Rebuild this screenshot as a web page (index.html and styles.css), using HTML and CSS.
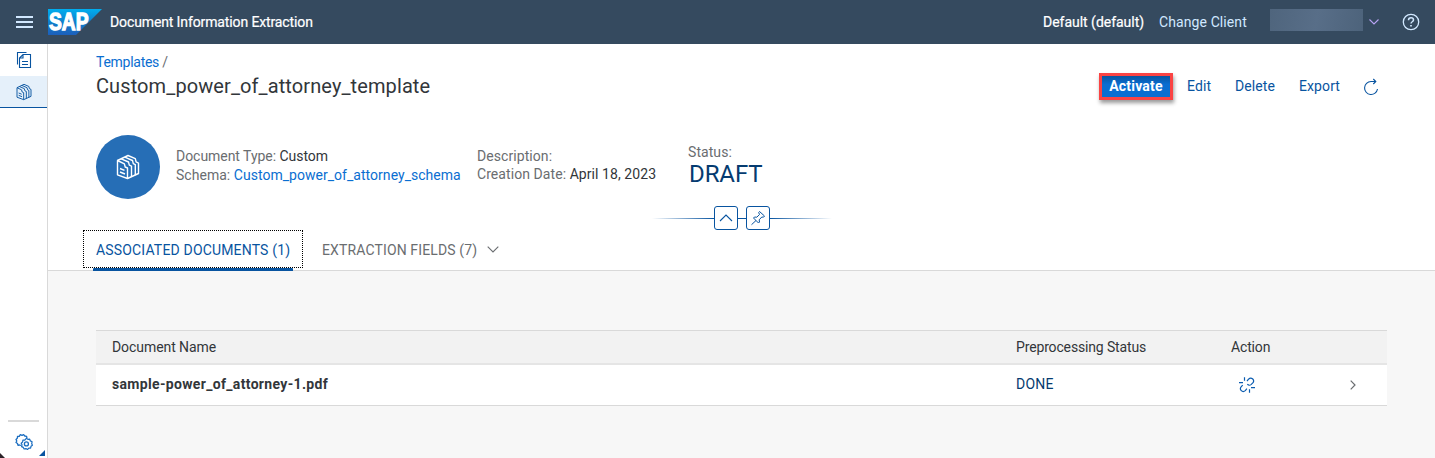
FILE: index.html
```html
<!DOCTYPE html>
<html lang="en">
<head>
<meta charset="utf-8">
<title>Document Information Extraction</title>
<link rel="stylesheet" href="styles.css">
</head>
<body>
<header class="shell">
  <svg class="menu" width="17" height="14" viewBox="0 0 17 14"><path d="M0 2h17M0 7h17M0 12h17" stroke="#d1e8ff" stroke-width="2"/></svg>
  <svg class="logo" width="54" height="26" viewBox="0 0 54 26">
    <defs><linearGradient id="sap" x1="0" y1="0" x2="0" y2="1"><stop offset="0" stop-color="#00aeef"/><stop offset=".5" stop-color="#0f80cc"/><stop offset="1" stop-color="#1c5fbb"/></linearGradient></defs>
    <path d="M0 0h54L28 26H0z" fill="url(#sap)"/>
    <text x="1" y="20.8" class="logo-text" textLength="39.5" lengthAdjust="spacingAndGlyphs">SAP</text>
  </svg>
  <span class="product">Document Information Extraction</span>
  <div class="shell-right">
    <span class="client">Default (default)</span>
    <span class="change">Change Client</span>
    <span class="user"></span>
    <svg class="user-arrow" width="10" height="6" viewBox="0 0 10 6"><path d="M.5.5 5 5 9.500.5" fill="none" stroke="#b9a4f5" stroke-width="1.1"/></svg>
    <svg class="help" width="18" height="18" viewBox="0 0 18 18" fill="none" stroke="#d1e8ff" stroke-width="1.3"><circle cx="9" cy="9" r="7.700"/><path d="M6.500 7.200C6.500 5.600 7.500 4.800 9 4.800s2.500.9 2.500 2.200c0 1.700-2.500 1.800-2.500 3.500" stroke-width="1.500"/><path d="M9 12v1.600" stroke-width="1.700"/></svg>
  </div>
</header>
<div class="body">
  <nav class="side">
    <a class="side-item">
      <svg width="16" height="18" viewBox="0 0 16 18" fill="none" stroke="#0854a0" stroke-width="1.100"><path d="M1.500 13.500V1.500h9M7 3.500h7.500v13h-11V7zM3.500 7H7V3.500"/><path d="M6 10.500h6M6 13.500h6"/></svg>
    </a>
    <a class="side-item selected">
      <svg width="16" height="18" viewBox="0 0 24 26"><use href="#binders"/></svg>
    </a>
    <div class="side-bottom">
      <div class="side-rule"></div>
      <svg class="gears" width="18" height="18" viewBox="0 0 18 18" fill="none" stroke="#1a6dc0" stroke-linejoin="round"><path d="M6 12.500 4.500 12 3 12.300 2.500 10.500 1 9.500 1.800 8 1 6.500 2.300 5.300 2.500 3.500 4.300 3.300 5.300 1.700 7 2.400 8.600 1.600 9.800 3 11.600 3.300 12 5" stroke-width="1.300"/><path d="m11.500 5.200 1.400 1.200 1.800-.2.700 1.700 1.700.8-.4 1.800.7 1.700-1.400 1.100-.4 1.800-1.800.1-1.300 1.300-1.600-.9-1.800.4-.8-1.600-1.700-.8.400-1.800-.8-1.600 1.400-1.200.3-1.800 1.900-.1z" stroke-width="1.200"/><circle cx="11.400" cy="10.900" r="2" stroke-width="1.300"/></svg>
      <i class="corner"></i>
      <i class="corner-dark"></i>
    </div>
  </nav>
  <main class="main">
    <section class="object-header">
      <div class="title-row">
        <div class="titles">
          <div class="crumb"><a>Templates</a> /</div>
          <h1 class="title">Custom_power_of_attorney_template</h1>
        </div>
        <div class="actions">
          <a class="activate">Activate</a>
          <a class="edit">Edit</a>
          <a class="delete">Delete</a>
          <a class="export">Export</a>
          <svg width="16" height="18" viewBox="0 0 16 18" fill="none" stroke="#0854a0" stroke-width="1.100"><path d="M12.500 3.500H8A6.500 6.500 0 1 0 14.500 11"/><path d="M10.300 1 12.800 3.500 10.300 6"/></svg>
        </div>
      </div>
      <div class="facts">
        <div class="avatar"><svg width="24" height="26" viewBox="0 0 24 26">
          <g id="binders" fill="none" stroke="currentColor" stroke-width="1.400" stroke-linejoin="round">
            <path d="M1.500 6.500v14.300l10 3.700V14l-2.300-1-.8-3.200z"/>
            <path d="M5.200 4.800 12.500 8l.8 3.200 2.200 1v10.500M8.800 3.200l7.700 3.300.8 3.200 2 1v10.500"/>
            <path d="M1.500 6.500 12 1.500l7.300 3.200.8 3.200 2.400 1.200v10.400l-11 5"/>
            <path d="M4 14.500l4.500 1.800M4 18l5 2"/>
          </g></svg></div>
        <div class="col col-type">
          <div>Document Type: <b>Custom</b></div>
          <div class="schema">Schema: <a>Custom_power_of_attorney_schema</a></div>
        </div>
        <div class="col col-desc">
          <div>Description:</div>
          <div>Creation Date: <b>April 18, 2023</b></div>
        </div>
        <div class="col col-status">
          <div>Status:</div>
          <div class="draft">DRAFT</div>
        </div>
      </div>
      <div class="handle">
        <i class="fade-left"></i>
        <span class="knob"><svg width="14" height="8" viewBox="0 0 14 8"><path d="M1 7 7 1l6 6" fill="none" stroke="#0854a0" stroke-width="1.100"/></svg></span>
        <i class="joint"></i>
        <span class="knob"><svg width="16" height="16" viewBox="0 0 16 16" fill="none" stroke="#0854a0" stroke-linejoin="round"><path d="m9.500 1.500 5 4.500-1 1.200-1.700-.2-2.600 2.800.3 2.200-1 1L3.500 8l1-1 2.300.2 2.700-2.700-.8-2zM6 10.500l-4.500 4.200"/></svg></span>
        <i class="fade-right"></i>
      </div>
      <div class="tabs">
        <div class="tab active"><span class="t1">ASSOCIATED DOCUMENTS (1)</span></div>
        <div class="tab"><span class="t2">EXTRACTION FIELDS (7)</span><svg width="12" height="7" viewBox="0 0 12 7"><path d="M.7.700 6 6 11.300.7" fill="none" stroke="#6a6d70" stroke-width="1.100"/></svg></div>
      </div>
    </section>
    <section class="content">
      <div class="table">
        <div class="row head"><span class="name-head">Document Name</span><span>Preprocessing Status</span><span>Action</span><span></span></div>
        <div class="row"><span class="file">sample-power_of_attorney-1.pdf</span><span class="done">DONE</span>
          <span class="unlink"><svg width="16" height="16" viewBox="0 0 16 16" fill="none" stroke="#0a5cb0" stroke-width="1.200"><path d="M5.500.3v3.500M0 5.700h4M10.500 12.200v3.500M12 10.700h4M8 4.200l1.500-2C11 .8 12.500 1 13.800 2c1.200 1.300 1 2.700 0 3.900L12 7.600c-1 .8-2.500.8-3.700-.3M3.700 8.200 2.300 9.700c-1.100 1.200-1.200 2.700 0 3.900 1.200 1.200 2.700 1.100 4 0l1.600-1.900"/></svg></span>
          <span class="nav"><svg width="6" height="10" viewBox="0 0 6 10"><path d="M.7.700 5 5 .7 9.300" fill="none" stroke="#6a6d70" stroke-width="1.200"/></svg></span></div>
      </div>
    </section>
  </main>
</div>
</body>
</html>
```
FILE: styles.css
```css
* { box-sizing: border-box; }
body { margin: 0; width: 1435px; height: 458px; overflow: hidden; background: #f7f7f7; font: 14px/18px Roboto, "Noto Sans", sans-serif; color: #32363a; }
svg { display: block; flex: none; }
span, a, div { white-space: nowrap; }
.shell { height: 44px; background: #354a5f; display: flex; align-items: center; padding-left: 16px; color: #fff; }
.logo { margin-left: 15px; }
.logo-text { font: bold 23px "Liberation Sans", sans-serif; fill: #fff; stroke: #fff; stroke-width: 1.3px; }
.product { margin-left: 8px; letter-spacing: -.12px; -webkit-text-stroke: .2px #fff; }
.shell-right { margin-left: auto; display: flex; align-items: center; padding-right: 15px; }
.client { width: 116px; letter-spacing: -.02px; -webkit-text-stroke: .2px #fff; }
.change { width: 111px; letter-spacing: .1px; color: #d1e8ff; }
.user { width: 93px; height: 22px; margin-top: -4px; background: linear-gradient(100deg, #4f657d, #586e88 50%, #4d637b); }
.user-arrow { margin-left: 6px; }
.help { margin-left: 23px; }
.body { display: flex; height: 414px; }
.side { width: 48px; background: #fff; border-right: 1px solid #d9d9d9; display: flex; flex-direction: column; position: relative; }
.side-item { height: 32px; display: flex; justify-content: center; align-items: center; color: #0854a0; padding-left: 1px; }
.selected { background: #e5f0fa; border-bottom: 1px solid #0854a0; }
.side-bottom { margin-top: auto; height: 38px; }
.side-rule { margin: 0 8px; height: 2px; background: #d9d9d9; }
.gears { margin: 11px 0 0 15px; }
.corner { position: absolute; right: 2px; bottom: 2px; border-left: 6px solid transparent; border-bottom: 6px solid #0854a0; }
.corner-dark { position: absolute; left: 0; bottom: 0; border-right: 5px solid transparent; border-bottom: 5px solid #2b2228; }
.main { flex: 1; min-width: 0; }
.object-header { height: 227px; background: #fff; border-bottom: 1px solid #d9d9d9; padding: 9px 56px 0 48px; }
.title-row { display: flex; justify-content: space-between; height: 82px; }
.crumb { color: #6a6d70; letter-spacing: -.27px; }
.crumb a, .schema a { color: #0a6ed1; }
.title { margin: 3px 0 0; font-size: 20px; line-height: 24px; font-weight: 400; letter-spacing: .1px; }
.actions { display: flex; align-items: center; height: 27px; margin-top: 20px; color: #0854a0; letter-spacing: .1px; }
.activate { width: 74px; height: 27px; border: 3px solid #fa4343; background: linear-gradient(#0854a0, #0a6ed1 40%); color: #fff; font-weight: 700; letter-spacing: .2px; line-height: 21px; text-align: center; box-shadow: 1px 3px 4px rgba(0,0,0,.4); margin-right: 14px; }
.edit { width: 48px; }
.delete, .export { width: 64px; }
.edit, .delete, .export { padding-bottom: 2px; }
.facts { display: flex; height: 64px; color: #6a6d70; }
.facts b { font-weight: 400; color: #32363a; }
.avatar { width: 64px; height: 64px; border-radius: 50%; background: #266eb6; color: #fff; display: flex; align-items: center; justify-content: center; }
.col { letter-spacing: .07px; }
.col-type { margin-left: 16px; width: 301px; padding-top: 12px; line-height: 19px; letter-spacing: -.04px; }
.schema { letter-spacing: .03px; }
.col-desc { width: 211px; padding-top: 12px; }
.col-status { padding-top: 8px; }
.draft { font-size: 24px; line-height: 26px; color: #053b70; letter-spacing: -.1px; padding-left: 1px; }
.handle { display: flex; align-items: center; height: 24px; margin: 7px 0 0 556px; }
.fade-left, .fade-right { width: 62px; height: 1px; background: linear-gradient(to left, #0854a0, #fff); }
.fade-right { background: linear-gradient(to right, #0854a0, #fff); }
.joint { width: 8px; height: 1px; background: #0854a0; }
.knob { width: 24px; height: 24px; border: 1px solid #0854a0; border-radius: 3px; display: flex; align-items: center; justify-content: center; }
.tabs { display: flex; margin-left: -13px; height: 41px; }
.tab { display: flex; align-items: center; height: 38px; color: #6a6d70; gap: 10px; padding: 1px 0 0 19px; }
.tab.active { width: 220px; border: 1px dotted #000; padding: 2px 0 0 12px; color: #0854a0; position: relative; }
.tab.active::after { content: ""; position: absolute; left: 9px; bottom: -4px; width: 200px; height: 3px; background: #0854a0; border-radius: 1px 1px 0 0; }
.t1 { letter-spacing: .17px; }
.t2 { letter-spacing: .13px; }
.content { padding: 59px 48px 0; }
.table { border-top: 1px solid #d9d9d9; border-bottom: 1px solid #d9d9d9; background: #fff; }
.row { display: grid; grid-template-columns: 904px 215px 117px 1fr; align-items: center; padding-left: 16px; height: 40px; }
.head { height: 34px; background: #f2f2f2; border-bottom: 2px solid #e5e5e5; letter-spacing: -.15px; }
.name-head { letter-spacing: -.07px; }
.file { font-weight: 700; letter-spacing: .33px; padding-bottom: 2px; }
.done { color: #053b70; letter-spacing: .2px; padding-bottom: 2px; }
.unlink { padding-left: 8px; }
.nav { padding-left: 2px; }
```
